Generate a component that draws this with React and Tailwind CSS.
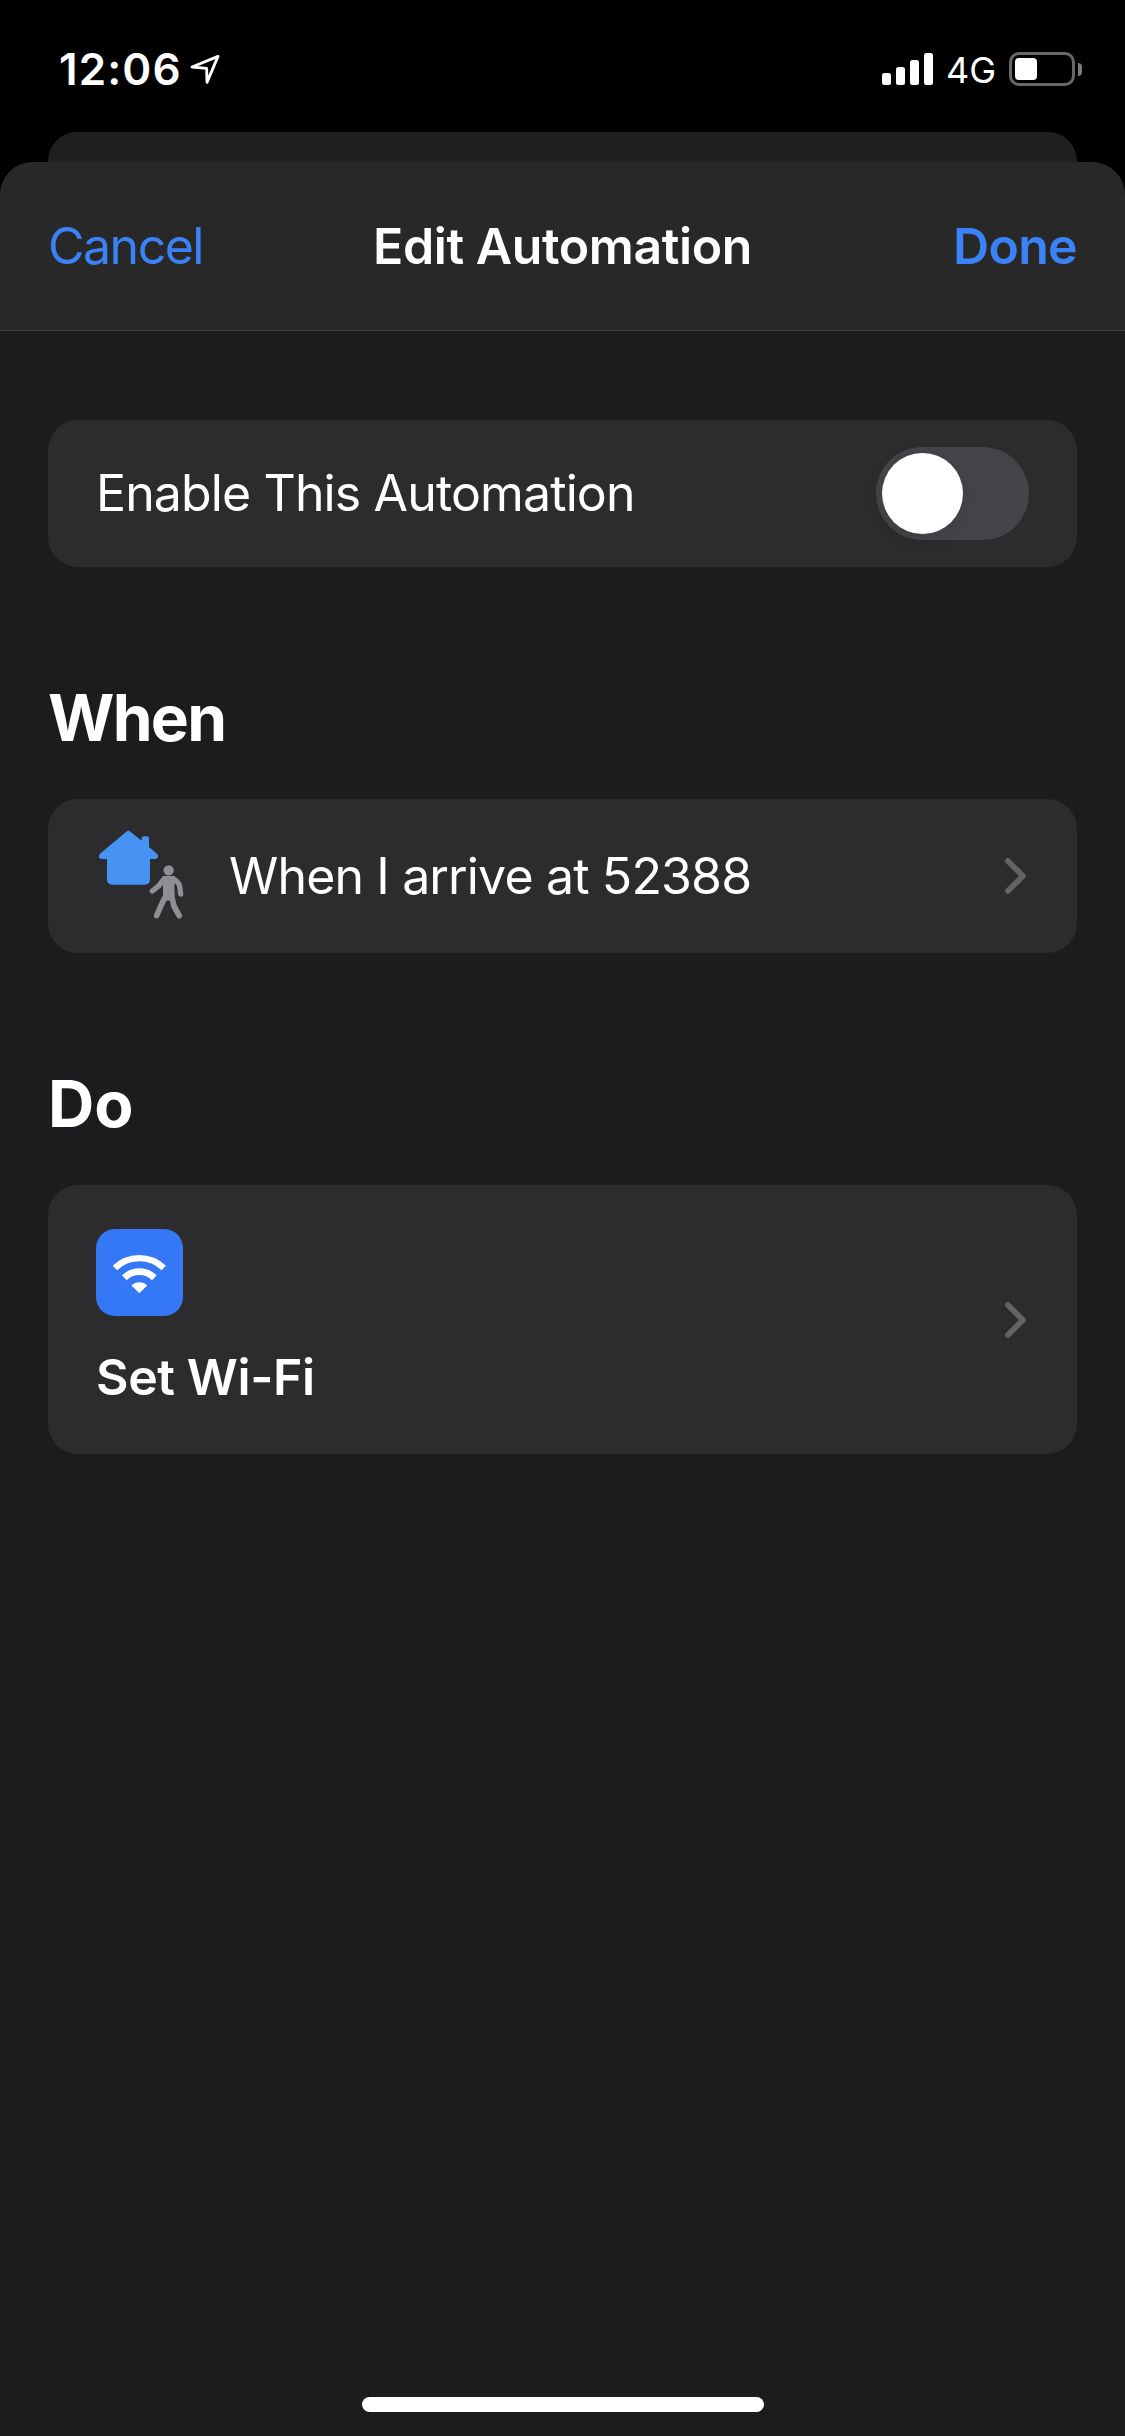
function LocationArrow() {
  return (
    <svg className="ml-2 h-[30px] w-[30px]" viewBox="0 0 90 90" fill="none">
      <path d="M84 7 L6 39 L50 43 L51 85 Z" stroke="white" strokeWidth="8.5" strokeLinejoin="round" />
    </svg>
  );
}

function Signal() {
  return (
    <div className="flex h-8 items-end gap-[5px]">
      <div className="h-3 w-[9px] rounded-[2.5px] bg-white" />
      <div className="h-[18px] w-[9px] rounded-[2.5px] bg-white" />
      <div className="h-[25px] w-[9px] rounded-[2.5px] bg-white" />
      <div className="h-8 w-[9px] rounded-[2.5px] bg-white" />
    </div>
  );
}

function Battery() {
  return (
    <div className="flex items-center gap-[3px]">
      <div className="h-[34px] w-[66px] rounded-[10px] border-[3px] border-[#676767] p-[3px]">
        <div className="h-[22px] w-[22px] rounded-[4px] bg-white" />
      </div>
      <div className="h-[13px] w-1 rounded-r-full bg-[#7c7c7c]" />
    </div>
  );
}

function StatusBar() {
  return (
    <div className="flex h-[132px] items-center justify-between pt-1.5 pr-[43px] pl-[59px] text-white">
      <div className="flex items-center">
        <span className="text-[44px] leading-none font-semibold tracking-[1.1px]">12:06</span>
        <LocationArrow />
      </div>
      <div className="flex items-center">
        <Signal />
        <span className="ml-[13px] pt-0.5 text-[36px] leading-none">4G</span>
        <div className="ml-[13px]">
          <Battery />
        </div>
      </div>
    </div>
  );
}

function Chevron() {
  return (
    <svg className="h-9 w-[21px]" viewBox="0 0 21 36" fill="none">
      <path d="M2.9 2.9 L18 18 L2.9 33.1" stroke="#636366" strokeWidth="5.6" strokeLinecap="round" strokeLinejoin="round" />
    </svg>
  );
}

function ArriveIcon() {
  return (
    <svg className="h-[92px] w-[92px] shrink-0" viewBox="0 0 276 276">
      <path
        fill="#4793f3"
        d="M91 5 Q97 0 103 5 L137 32 V25 Q137 19 143 19 H153 Q159 19 159 25 V51 L183 71 Q188 76 186 81 Q184 87 178 87 H162 V148 Q162 164 146 164 H49 Q33 164 33 148 V87 H17 Q11 87 9 81 Q8 75 12 71 Z"
      />
      <g transform="translate(-168 -120)" stroke="#8e8e93" fill="none" strokeLinecap="round" strokeLinejoin="round">
        <circle cx="386" cy="241" r="15.5" fill="#8e8e93" stroke="none" />
        <path
          d="M374 258 H400 Q408 260 408 268 L403 286 L404 318 L400 330 Q386 333 374 330 L369 316 V270 Z"
          fill="#8e8e93"
          stroke="none"
        />
        <path d="M373 266 L357 287 L337 303" strokeWidth="16" />
        <path d="M400 266 Q417 278 419 288 L422 312" strokeWidth="16" />
        <path d="M378 318 Q368 334 363 347 L350 377" strokeWidth="17" />
        <path d="M395 318 L401 345 Q404 354 418 377" strokeWidth="17" />
      </g>
    </svg>
  );
}

function WifiIcon() {
  return (
    <div className="h-[87px] w-[87px] rounded-[19px] bg-[#3478f6]">
      <svg className="h-full w-full" viewBox="0 0 261 261" fill="none">
        <path d="M56.7 117.1 A105.5 105.5 0 0 1 203.3 117.1" stroke="white" strokeWidth="19" />
        <path d="M84.8 146.2 A65 65 0 0 1 175.2 146.2" stroke="white" strokeWidth="20" />
        <path d="M130 193 L106.5 169.5 A33.5 33.5 0 0 1 153.5 169.5 Z" fill="white" />
      </svg>
    </div>
  );
}

function Toggle() {
  return (
    <div className="h-[93px] w-[153px] rounded-full bg-[#454449] p-1.5">
      <div className="h-[81px] w-[81px] rounded-full bg-white shadow-[0_4px_18px_rgba(0,0,0,0.12)]" />
    </div>
  );
}

function SectionTitle({ children }) {
  return (
    <div className="mt-28 mb-[43px] flex h-[77px] items-center text-[64px] leading-none font-bold text-white">
      {children}
    </div>
  );
}

export default function App() {
  return (
    <div className="flex h-[2436px] w-[1125px] flex-col overflow-hidden bg-black font-['Inter',sans-serif] text-[50px] leading-none whitespace-nowrap text-white">
      <StatusBar />
      <div className="mx-12 h-[30px] shrink-0 rounded-t-[29px] bg-[#202022]" />
      <div className="flex flex-1 flex-col overflow-hidden rounded-t-[33px] bg-[#1c1c1e]">
        <div className="grid h-[169px] shrink-0 grid-cols-[1fr_auto_1fr] items-center border-b border-[#3e3e41] bg-[#282828] px-12">
          <span className="tracking-[-1.5px] text-[#3b82f7]">Cancel</span>
          <span className="text-center font-semibold tracking-[-0.4px]">Edit Automation</span>
          <span className="text-right font-semibold tracking-[-0.7px] text-[#3b82f7]">Done</span>
        </div>
        <div className="flex flex-col px-12 pt-[89px]">
          <div className="flex h-[147px] items-center justify-between rounded-[30px] bg-[#2c2c2e] px-12">
            <span className="pb-px tracking-[-0.87px]">Enable This Automation</span>
            <Toggle />
          </div>
          <SectionTitle>
            <span className="tracking-[-1.75px]">When</span>
          </SectionTitle>
          <div className="flex h-[154px] items-center rounded-[30px] bg-[#2c2c2e] pr-[51px] pl-12">
            <ArriveIcon />
            <span className="ml-[41px] flex-1 tracking-[-0.85px]">When I arrive at 52388</span>
            <Chevron />
          </div>
          <SectionTitle>Do</SectionTitle>
          <div className="flex h-[269px] items-center justify-between rounded-[30px] bg-[#2c2c2e] pr-[51px] pl-12">
            <div className="flex flex-col gap-9 pb-2">
              <WifiIcon />
              <span className="font-semibold tracking-[-0.37px]">Set Wi-Fi</span>
            </div>
            <Chevron />
          </div>
        </div>
        <div className="mx-auto mt-auto mb-6 h-[15px] w-[402px] rounded-full bg-white" />
      </div>
    </div>
  );
}
